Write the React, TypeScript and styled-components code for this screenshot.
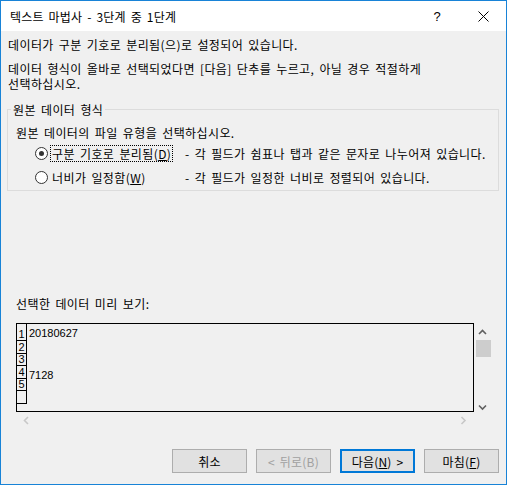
import styled, { createGlobalStyle } from "styled-components";

const GlobalStyle = createGlobalStyle`
  html, body {
    margin: 0;
    padding: 0;
    background: #ffffff;
  }
  body {
    font-family: "Noto Sans CJK KR", "Noto Sans", sans-serif;
  }
`;

const Window = styled.div`
  width: 507px;
  height: 485px;
  box-sizing: border-box;
  border: 1px solid #1883d7;
  background: #f0f0f0;
  display: flex;
  flex-direction: column;
  color: #000;
  font-size: 12px;
  letter-spacing: 0.4px;
  word-spacing: 2px;
  line-height: 15px;
  white-space: nowrap;
`;

const TitleBar = styled.div`
  height: 30px;
  background: #ffffff;
  display: flex;
  align-items: center;
  padding-left: 9px;
`;

const Title = styled.span`
  flex: 1;
  letter-spacing: 0.2px;
`;

const CaptionButton = styled.div`
  width: 46px;
  height: 30px;
  display: flex;
  align-items: center;
  justify-content: center;
  font-family: "Liberation Sans", sans-serif;
  font-size: 13px;
  letter-spacing: 0;
`;

const Body = styled.div`
  flex: 1;
  display: flex;
  flex-direction: column;
  padding: 0 7px 0 6px;
`;

const Intro = styled.div<{ $top: number }>`
  margin-top: ${(p) => p.$top}px;
  padding-left: 1px;
`;

const Group = styled.fieldset`
  margin: 11px 0 0 0;
  padding: 0 0 5px 0;
  border: 1px solid #dcdcdc;
  min-width: 0;
`;

const Legend = styled.legend`
  margin-left: 3px;
  padding: 0 2px;
`;

const GroupText = styled.div`
  margin-top: 8px;
  padding-left: 8px;
`;

const Options = styled.div`
  margin-top: 5px;
  display: grid;
  grid-template-columns: 150px 1fr;
  row-gap: 8px;
  padding-left: 27px;
`;

const OptionLabel = styled.label`
  display: flex;
  align-items: center;
  height: 16px;
`;

const Radio = styled.span<{ $checked?: boolean }>`
  width: 11px;
  height: 11px;
  border: 1px solid #333;
  border-radius: 50%;
  background: #fff;
  display: flex;
  align-items: center;
  justify-content: center;
  margin-right: 2px;
  flex-shrink: 0;

  &::after {
    content: "";
    width: 5px;
    height: 5px;
    border-radius: 50%;
    background: #333;
    display: ${(p) => (p.$checked ? "block" : "none")};
  }
`;

const LabelText = styled.span<{ $focused?: boolean }>`
  padding: 0 1px 0 1px;
  height: 17px;
  box-sizing: border-box;
  border: 1px dotted ${(p) => (p.$focused ? "#000" : "transparent")};
  display: flex;
  align-items: center;
`;

const Description = styled.span`
  display: flex;
  align-items: center;
  height: 16px;
`;

const PreviewLabel = styled.div`
  margin-top: 105px;
  padding-left: 9px;
`;

const Preview = styled.div`
  margin: 12px 0 0 9px;
  display: grid;
  grid-template-columns: 458px 17px;
  grid-template-rows: 89px 16px;
`;

const DataBox = styled.div`
  border: 1px solid #000;
  background: #f0f0f0;
  overflow: hidden;
  font-family: "Liberation Sans", sans-serif;
  font-size: 11px;
  letter-spacing: 0;
  word-spacing: 0;
`;

const DataRow = styled.div<{ $height: number }>`
  display: flex;
  height: ${(p) => p.$height}px;
`;

const NumCell = styled.div`
  width: 10px;
  box-sizing: border-box;
  border-right: 1px solid #000;
  border-bottom: 1px solid #000;
  display: flex;
  align-items: flex-end;
  justify-content: center;
  font-size: 11px;
  line-height: 11px;
`;

const DataCell = styled.div`
  padding-left: 2px;
  padding-top: 4px;
  line-height: 11px;
`;

const VScroll = styled.div`
  display: flex;
  flex-direction: column;
  align-items: center;
  padding-top: 5px;
`;

const Thumb = styled.div`
  width: 15px;
  height: 17px;
  background: #cdcdcd;
  margin-top: 3px;
  margin-left: 1px;
`;

const Spacer = styled.div`
  flex: 1;
`;

const HScroll = styled.div`
  display: flex;
  justify-content: space-between;
  align-items: center;
  padding: 0 6px;
`;

const Footer = styled.div`
  margin-top: 21px;
  display: flex;
  justify-content: flex-end;
  gap: 9px;
`;

const Button = styled.div<{ $disabled?: boolean; $default?: boolean }>`
  width: 75px;
  height: 24px;
  box-sizing: border-box;
  background: #e1e1e1;
  border: ${(p) => (p.$default ? "2px solid #0078d7" : "1px solid #adadad")};
  color: ${(p) => (p.$disabled ? "#a0a0a0" : "#000")};
  display: flex;
  align-items: center;
  justify-content: center;
  letter-spacing: 0.2px;
`;

const Key = styled.u`
  text-underline-offset: 1px;
`;

const Chevron = ({ dir, color }: { dir: "up" | "down" | "left" | "right"; color: string }) => {
  const paths = {
    up: "M1 6 L4.5 2.5 L8 6",
    down: "M1 2.5 L4.5 6 L8 2.5",
    left: "M6 1 L2.5 4.5 L6 8",
    right: "M2.5 1 L6 4.5 L2.5 8",
  };
  return (
    <svg width="9" height="9" viewBox="0 0 9 9">
      <path d={paths[dir]} fill="none" stroke={color} strokeWidth="1.6" />
    </svg>
  );
};

const rows = [
  { n: "1", text: "20180627", h: 17 },
  { n: "2", text: "", h: 13 },
  { n: "3", text: "", h: 12 },
  { n: "4", text: "7128", h: 13 },
  { n: "5", text: "", h: 12 },
  { n: "", text: "", h: 13 },
];

export default function App() {
  return (
    <>
      <GlobalStyle />
      <Window>
        <TitleBar>
          <Title>텍스트 마법사 - 3단계 중 1단계</Title>
          <CaptionButton>?</CaptionButton>
          <CaptionButton>
            <svg width="11" height="11" viewBox="0 0 11 11">
              <path d="M0.5 0.5 L10.5 10.5 M10.5 0.5 L0.5 10.5" stroke="#000" strokeWidth="1" />
            </svg>
          </CaptionButton>
        </TitleBar>
        <Body>
          <Intro $top={6}>데이터가 구분 기호로 분리됨(으)로 설정되어 있습니다.</Intro>
          <Intro $top={9}>
            데이터 형식이 올바로 선택되었다면 [다음] 단추를 누르고, 아닐 경우 적절하게
            <br />
            선택하십시오.
          </Intro>
          <Group>
            <Legend>원본 데이터 형식</Legend>
            <GroupText>원본 데이터의 파일 유형을 선택하십시오.</GroupText>
            <Options>
              <OptionLabel>
                <Radio $checked />
                <LabelText $focused>
                  구분 기호로 분리됨(<Key>D</Key>)
                </LabelText>
              </OptionLabel>
              <Description>- 각 필드가 쉼표나 탭과 같은 문자로 나누어져 있습니다.</Description>
              <OptionLabel>
                <Radio />
                <LabelText>
                  너비가 일정함(<Key>W</Key>)
                </LabelText>
              </OptionLabel>
              <Description>- 각 필드가 일정한 너비로 정렬되어 있습니다.</Description>
            </Options>
          </Group>
          <PreviewLabel>선택한 데이터 미리 보기:</PreviewLabel>
          <Preview>
            <DataBox>
              {rows.map((r, i) => (
                <DataRow key={i} $height={r.h}>
                  <NumCell>{r.n}</NumCell>
                  <DataCell>{r.text}</DataCell>
                </DataRow>
              ))}
            </DataBox>
            <VScroll>
              <Chevron dir="up" color="#606060" />
              <Thumb />
              <Spacer />
              <Chevron dir="down" color="#606060" />
            </VScroll>
            <HScroll>
              <Chevron dir="left" color="#c8c8c8" />
              <Chevron dir="right" color="#c8c8c8" />
            </HScroll>
          </Preview>
          <Footer>
            <Button>취소</Button>
            <Button $disabled>&lt; 뒤로(B)</Button>
            <Button $default>
              다음(<Key>N</Key>) &gt;
            </Button>
            <Button>
              마침(<Key>F</Key>)
            </Button>
          </Footer>
        </Body>
      </Window>
    </>
  );
}
